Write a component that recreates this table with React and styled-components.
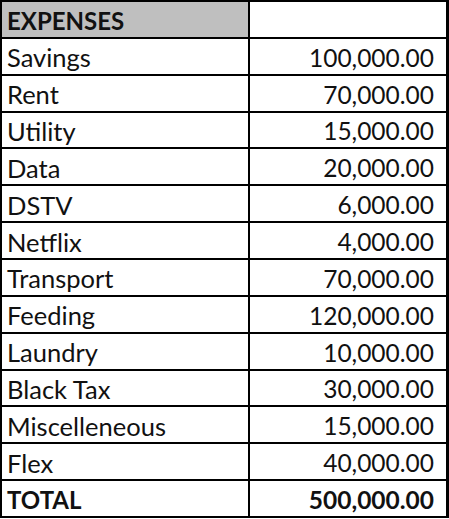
import React from "react"
import styled, { createGlobalStyle } from 'styled-components';

const GlobalStyle = createGlobalStyle`
body {
  margin: 0;
  background: #fff;
}
`

const Sheet = styled.div`
display: grid;
grid-template-columns: 246px 196px;
grid-template-rows: repeat(14, 1fr);
gap: 2px;
padding: 2px;
width: 446px;
height: 514px;
background-color: #000;
font-family: Lato, "Liberation Sans", sans-serif;
color: #111;
`

const Cell = styled.div`
display: flex;
align-items: center;
justify-content: ${props => props.num ? 'flex-end' : 'flex-start'};
padding: ${props => props.num ? '2px 12px 0 0' : '2px 0 0 5px'};
background-color: ${props => props.head ? '#bfbfbf' : '#fff'};
font-weight: ${props => props.bold ? 700 : 400};
font-size: ${props => props.num ? '24.5px' : props.bold ? '24px' : '25.5px'};
white-space: nowrap;
`

const rows = [
  ["Savings", "100,000.00"],
  ["Rent", "70,000.00"],
  ["Utility", "15,000.00"],
  ["Data", "20,000.00"],
  ["DSTV", "6,000.00"],
  ["Netflix", "4,000.00"],
  ["Transport", "70,000.00"],
  ["Feeding", "120,000.00"],
  ["Laundry", "10,000.00"],
  ["Black Tax", "30,000.00"],
  ["Miscelleneous", "15,000.00"],
  ["Flex", "40,000.00"],
]

const App = () => {
    return(
<>
<GlobalStyle />
<Sheet>
 <Cell head bold>EXPENSES</Cell>
 <Cell num></Cell>
 {rows.map(r => (
   <React.Fragment key={r[0]}>
     <Cell>{r[0]}</Cell>
     <Cell num>{r[1]}</Cell>
   </React.Fragment>
 ))}
 <Cell bold>TOTAL</Cell>
 <Cell num bold>500,000.00</Cell>
</Sheet>
</>
    )};

export default App
